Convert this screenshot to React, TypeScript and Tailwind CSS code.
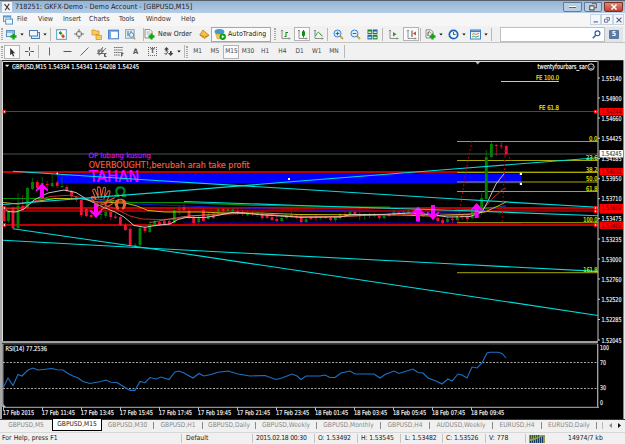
import type { ReactNode } from 'react'
import { clsx } from 'clsx'

const UI_FONT = "font-['DejaVu_Sans_Condensed','DejaVu_Sans',sans-serif]"

const MENUS = [
  { label: 'File', w: 'w-[21px]' },
  { label: 'View', w: 'w-[25px]' },
  { label: 'Insert', w: 'w-[26px]' },
  { label: 'Charts', w: 'w-[30px]' },
  { label: 'Tools', w: 'w-[27px]' },
  { label: 'Window', w: 'w-[35px]' },
  { label: 'Help', w: 'w-[20px]' },
]

const PERIODS = ['M1', 'M5', 'M15', 'M30', 'H1', 'H4', 'D1', 'W1', 'MN']

const TABS = [
  { label: 'GBPUSD,M5', w: 'w-[52px]' },
  { label: 'GBPUSD,M15', w: 'w-[50px]' },
  { label: 'GBPUSD,M30', w: 'w-[52px]' },
  { label: 'GBPUSD,H1', w: 'w-[49px]' },
  { label: 'GBPUSD,Daily', w: 'w-[53px]' },
  { label: 'GBPUSD,Weekly', w: 'w-[61px]' },
  { label: 'GBPUSD,Monthly', w: 'w-[64px]' },
  { label: 'GBPUSD,H4', w: 'w-[49px]' },
  { label: 'AUDUSD,Weekly', w: 'w-[63px]' },
  { label: 'EURUSD,H4', w: 'w-[49px]' },
  { label: 'EURUSD,Daily', w: 'w-[55px]' },
]

const STATUS = [
  { text: 'For Help, press F1', w: 'w-[182px] pl-[2px] tracking-[0.04px]' },
  { text: 'Default', w: 'w-[71px] pl-[4px]' },
  { text: '2015.02.18 00:30', w: 'w-[62px] pl-[3px] tracking-[-0.25px]' },
  { text: 'O: 1.53492', w: 'w-[43px] pl-[3px] tracking-[-0.12px]' },
  { text: 'H: 1.53545', w: 'w-[43px] pl-[3px] tracking-[-0.12px]' },
  { text: 'L: 1.53482', w: 'w-[42px] pl-[4px] tracking-[-0.12px]' },
  { text: 'C: 1.53526', w: 'w-[43px] pl-[3px] tracking-[-0.12px]' },
  { text: 'V: 778', w: 'w-[40px] pl-[3px]' },
]

/* Price scale: label + y of its centre */
const PRICES: [string, number][] = [
  ['1.55140', 78], ['1.54900', 98], ['1.54660', 118], ['1.54425', 138.3], ['1.54185', 158.7],
  ['1.53950', 178.7], ['1.53710', 198.7], ['1.53475', 218.6], ['1.53235', 239], ['1.53000', 259],
  ['1.52760', 279], ['1.52520', 299.3], ['1.52285', 319.5], ['1.52045', 340],
]

const TIMES = [
  '17 Feb 2015', '17 Feb 11:45', '17 Feb 13:45', '17 Feb 15:45', '17 Feb 17:45', '17 Feb 19:45', '17 Feb 21:45',
  '17 Feb 23:45', '18 Feb 01:45', '18 Feb 03:45', '18 Feb 05:45', '18 Feb 07:45', '18 Feb 09:45',
]

/* x, high, body top, body bottom, low, direction */
type Candle = [number, number, number, number, number, 'u' | 'd']
const CANDLES: Candle[] = [
  [4, 206, 210, 221, 222, 'd'], [8.5, 210, 212, 221, 223, 'u'], [13, 206, 208, 228, 229, 'd'],
  [18, 193, 206, 228, 229, 'u'], [22.7, 195, 206, 210, 211, 'd'], [27.5, 187, 188, 208, 209, 'u'],
  [32.5, 178, 182, 189, 190, 'u'], [37.3, 180, 182, 188, 189, 'd'], [42.3, 177, 183, 184, 195, 'u'],
  [47.2, 181, 184, 185, 190, 'd'], [52.2, 174, 183, 186, 187, 'u'], [57.2, 181, 182.5, 186, 188, 'd'],
  [62, 177, 186, 187, 188, 'u'], [66.8, 185, 187, 191, 192, 'd'], [71.6, 190, 191, 196, 199, 'd'],
  [76.4, 196, 197, 200, 202, 'd'], [81.3, 198, 200, 215, 217, 'd'], [86.4, 208, 209, 216, 217, 'd'],
  [91.2, 213, 215, 217, 218, 'd'], [96, 211, 213, 216, 218, 'd'], [100.8, 210, 214, 215, 219, 'u'],
  [105.8, 210, 212, 216, 218, 'u'], [110.7, 211, 212, 217, 220, 'd'], [115.4, 214, 216.5, 218, 219, 'd'],
  [120.4, 216, 217, 225, 226, 'd'], [125.4, 223, 225, 230, 231, 'd'], [130.2, 227, 229, 245, 246, 'd'],
  [135.2, 243, 245, 246, 247, 'u'], [140, 226, 228, 245, 247, 'u'], [145, 226, 228, 231, 233, 'd'],
  [149.8, 221, 224, 232, 233, 'u'], [154.7, 219, 222, 225, 227, 'u'], [159.5, 221, 222, 225, 226, 'd'],
  [164.4, 219, 221, 224, 225, 'd'], [169.3, 220, 221, 224, 225, 'd'], [174.3, 208, 210, 223, 224, 'u'],
  [179.3, 206, 209, 210, 215, 'u'], [184, 204, 207, 210, 211, 'd'], [189, 209, 211, 217, 219, 'd'],
  [193.7, 215, 218, 223, 226, 'd'], [198.7, 216, 218, 222, 224, 'u'], [203.4, 208, 210, 221, 222, 'd'],
  [208.3, 212, 215, 219, 220, 'u'], [213.4, 212, 215, 218, 219, 'd'], [218.3, 207, 209, 212, 214, 'u'],
  [223.2, 207, 209, 211, 213, 'd'], [228, 207, 209, 211, 212, 'u'], [232.8, 207, 209, 212, 213, 'u'],
  [237.7, 208, 211, 213, 215, 'd'], [242.6, 210, 212, 213, 216, 'd'], [247.5, 211, 213, 215, 216, 'u'],
  [252.4, 211, 213, 214, 216, 'd'], [257.3, 212, 214, 215, 217, 'u'], [262.2, 212, 214, 218, 220, 'd'],
  [267.1, 214, 215, 218, 219, 'd'], [272, 214, 217, 220, 221, 'd'], [276.8, 215, 219, 221, 222, 'd'],
  [281.7, 216, 218, 221, 222, 'u'], [286.5, 214, 216, 218, 219, 'u'], [291.4, 212, 215, 217, 218, 'u'],
  [296.3, 214, 216, 217, 219, 'd'], [301.2, 215, 217, 222, 223, 'd'], [306.1, 217, 219, 222, 223, 'u'],
  [311, 216, 218, 219, 220, 'd'], [315.9, 215, 217, 218, 221, 'd'], [320.7, 216, 217, 218, 220, 'u'],
  [325.6, 216, 217, 218, 219, 'd'], [330.5, 217, 218, 220, 221, 'd'], [335.4, 216, 217, 220, 222, 'u'],
  [340.2, 213, 214, 218, 220, 'u'], [345.1, 212, 214, 215, 218, 'd'], [350, 210, 212, 214, 216, 'u'],
  [354.9, 210, 212, 214, 215, 'd'], [359.7, 212, 214, 216, 220, 'd'], [364.6, 213, 215, 216, 219, 'u'],
  [369.5, 213, 215, 216, 218, 'd'], [374.4, 213, 215, 216, 217, 'u'], [379.3, 214, 216, 218, 220, 'd'],
  [384.1, 214, 216, 218, 219, 'u'], [389, 213, 215, 216, 217, 'd'], [393.9, 210, 211, 215, 216, 'u'],
  [398.8, 211, 212, 213, 215, 'd'], [403.6, 210, 212, 214, 216, 'u'], [408.5, 210, 211, 213, 214, 'u'],
  [413.4, 209, 211, 213, 214, 'd'], [423.2, 211, 212, 216, 217, 'd'], [428, 211, 213, 215, 216, 'u'],
  [437.8, 216, 218, 221, 222, 'd'], [442.6, 218, 220, 223, 224, 'd'], [447.5, 217, 219, 222, 223, 'u'],
  [452.4, 216, 219, 220, 223, 'd'], [457.3, 214, 216, 220, 221, 'u'], [462.2, 214, 216, 217, 220, 'd'],
  [467.3, 215, 217, 219, 224, 'd'], [472.3, 207, 210, 218, 219, 'u'], [481.6, 193, 198, 212, 215, 'u'],
  [486.3, 150, 157, 199, 202, 'u'], [491.4, 142, 144, 157, 158, 'u'], [496.3, 144, 145, 146, 156, 'd'],
  [501.3, 141, 145.5, 146.5, 149, 'd'], [506.3, 145, 146, 154, 155, 'd'],
]

const FIBS: [string, number][] = [
  ['0.0', 141.5], ['23.6', 160.5], ['38.2', 172.5], ['50.0', 182], ['61.8', 191.5], ['100.0', 222.7], ['161.8', 272.7],
]

const RED_TAGS: [string, number][] = [['1.54744', 111.7], ['1.54031', 171.8], ['1.53602', 207.6], ['1.53402', 225.2]]

const RSI =
  '3,388 8,378 13,385.5 18,374.5 22,376 28,370 33,368 38,370 43,369.5 52,368.5 57,369.7 63,370 68,373.5 73,376 78,378 83,381.5 90,383.5 101,381.5 106,380 111,382.3 117,382.5 121,385 126,388 130,390.4 135,390.4 140,381.5 145,382.7 150,377.5 156,379 161,377 169,379.5 175,372 179,371 184,373 193,378 199,373.5 204,376 211,374.5 218,372.2 228,371 238,374 250,376 265,375.5 276,379.5 282,378 292,374 297,376 301,379.5 306,376 320,376 325,375 330,377.5 335,377.5 341,373 350,371 355,374 374,374 380,378 385,374.5 394,371 399,373.5 413,369 418,372.5 423,373 428,378 436,381 442,384 448,379 452,381 458,374 462,375 467,378 472,367 477,368 482,363 487,353 490,352.3 498,352.3 502,353.5 506,358'

function Label({ x, y, w, size = 7, fill = '#f4f4f4', children }: {
  x: number
  y: number
  w: number
  size?: number
  fill?: string
  children: string
}) {
  return (
    <text
      x={x}
      y={y}
      fontSize={size}
      fill={fill}
      stroke={fill}
      strokeWidth=".15"
      textLength={w}
      lengthAdjust="spacingAndGlyphs"
    >
      {children}
    </text>
  )
}

function Arrow({ x, y, down }: { x: number; y: number; down?: boolean }) {
  return (
    <path
      transform={`translate(${x} ${y})${down ? ' rotate(180)' : ''}`}
      d="M0-7.5 6-1V1L2-1.5V7.5H-2V-1.5L-6 1V-1Z"
      fill="#f0f"
    />
  )
}

function Chart() {
  return (
    <svg
      width="625"
      height="359"
      viewBox="0 60 625 359"
      className={clsx('block shrink-0', UI_FONT)}
      fill="none"
    >
      <rect y="60" width="625" height="359" fill="#000" />
      <path d="M0 60H625" stroke="#333" strokeWidth="2" />
      <path d="M1 60V419" stroke="#a8a8a8" strokeWidth="2" />
      <path d="M624.2 60V419" stroke="#e8e8e8" strokeWidth="1.6" />
      <path d="M2.5 341V61.5H597.5" stroke="#ddd" />
      <path d="M475.5 62H480L477.7 64.5Z" fill="#b0b8c8" />

      {/* session band, price levels */}
      <path d="M3 154H598" stroke="#303a3e" strokeWidth="1.7" />
      <rect x="57" y="173.5" width="464" height="10" fill="#00f" />
      <path d="M184 223.2H521" stroke="#00d" strokeWidth="1.2" />
      <path d="M3 111.5H598" stroke="#f00000" />
      <g stroke="#c00000" strokeWidth="2">
        <path d="M3 172H598M3 208H598M3 225H598" />
        <path d="M3 211H598" strokeWidth="1.7" />
      </g>

      {/* fibonacci levels */}
      <g stroke="#a8a800">
        {FIBS.map(([l, y]) => (
          <path key={l} d={`M457 ${y}H598`} />
        ))}
        <path d="M501 81.5H559" stroke="#e0e000" />
      </g>

      {CANDLES.map(([x, hi, top, bottom, lo, dir]) => {
        const c = dir === 'u' ? '#008400' : '#ee1438'
        return (
          <g key={x}>
            <path d={`M${x} ${hi}V${lo}`} stroke={c} opacity=".65" />
            <rect x={x - 1.4} y={top} width="2.8" height={bottom - top} fill={c} />
          </g>
        )
      })}

      {/* moving averages */}
      <g strokeWidth=".9">
        <path d="M3 198.5 78 198.5 100 199.5 130 202.3 184 202.7 250 205.2 300 206 350 207 390 207.2M455 210 480 209 506 206" stroke="#009000" strokeWidth="1.2" />
        <path d="M35 201 60 198.5 95 199 110 203 130 203.7 160 205 200 206.5 270 209 330 210.5 400 212 455 212 480 211 506 206" stroke="#1414e8" />
        <path d="M3 202.5 18 204 32 202 55 198.5 80 198.5 98 202 125 203 137 206 148 210.5 165 212 200 212 230 213.2 260 213 300 214.5 400 215 430 216 470 214 485 212 498 206 506 202" stroke="#d8cc00" />
        <path d="M3 209 22 208 35 201 50 196.5 68 195.3 84 198 100 203 118 210 130 216 142 219 160 219.5 176 219 190 216 220 214.5 250 213 290 216 340 216.5 400 214 440 215.5 470 215 484 208 494 197 502 190 506 188" stroke="#e03020" />
        <path d="M3 207 8 211.5 16 212 24 209 34 200 48 193 64 190 76 192.5 88 200 103 207 115 212 124 217 134 225.5 145 227.3 155 225.5 170 224 178 219.5 186 217.5 205 217.5 220 215 232 212.5 245 213 260 214.7 300 217.3 340 217 350 214.8 385 214.3 410 213 430 214.5 448 217 470 216.5 482 212 488 201 496 184 505 172.5" stroke="#d8d8d8" />
        <path d="M150 222.5 184 216.5 232 212.7 300 216.8 345 216.5 380 214.5M440 214 470 214.5" stroke="#f8b0a0" opacity=".6" />
      </g>

      <Arrow x={42} y={190.5} />
      <Arrow x={96} y={210.5} down />
      <Arrow x={418} y={214} />
      <Arrow x={433} y={212.5} down />
      <Arrow x={476.7} y={210.5} />

      {/* hand and head symbols */}
      <g stroke="#e85a3a" strokeWidth="1.1" strokeLinejoin="round">
        <path d="M98 207 94.5 202 91.5 198.5C90.5 196.8 92 196 93.5 197L96 199.5 92.7 191C92.4 189 94.6 188.3 95.4 190.5L98.5 198 97.4 188.5C97.4 186.3 100 186.3 100.3 188.5L101.3 197.5 103.2 188.5C103.7 186.5 106 187 105.6 189.3L104 198.5 107.8 191.5C108.8 189.8 110.6 191 109.9 192.8L107 201.5 104.5 208" />
        <path d="M98 206 114 200.5M101 210 113 203.5M104 203 115 197.5" />
      </g>
      <path d="M114.6 197V194.5H116.5C114.5 192.5 114.3 186.5 120.4 186.3C126.6 186.5 126.4 192.5 124.4 194.5H126.3V197H121.6V194.5C124 193.5 124.4 188.8 120.4 188.6C116.5 188.8 116.9 193.5 119.3 194.5V197Z" fill="#008228" />
      <path d="M114.5 204C114.5 200 117.5 198.7 120.4 198.7S126.4 200 126.4 204L125 208C124 210 122.4 210 121.8 209L123 205 122 200.5H119L118 205 119.2 209C118.5 210 117 210 116 208Z" fill="#f0603c" />

      <Label x={88.5} y={157.8} w={62.5} size={7.2} fill="#d810f0">OP lubang kusung</Label>
      <Label x={88.7} y={168.3} w={161} size={8.8} fill="#f4623e">OVERBOUGHT!,berubah arah take profit</Label>
      <Label x={89} y={182} w={50.5} size={16.5} fill="#f0f">TAHAN</Label>

      {/* trend lines */}
      <g stroke="#00dede" strokeWidth="1.15">
        <path d="M13 171.2 160 180.7 300 189.3 460 199.3 598 207.3" />
        <path d="M3 204.5 160 192.4 300 181 460 168.5 598 157.8" />
        <path d="M3 240.3 160 248.8 440 263.3 598 271.4" />
        <path d="M13 228.7 160 250 440 291.7 598 315.5" />
        <path d="M184 201.5 300 205.5 460 210.5 598 215.8" />
      </g>
      <path d="M472 141 468 160 462 196 458 222M505 156V149L511 161" stroke="#c00000" strokeDasharray="2 2" />
      <path d="M505 156 502 224" stroke="#a00000" strokeDasharray="2 2" />

      <path d="M5 64.7H9.3L7.1 67Z" fill="#fff" />
      <Label x={12} y={68.6} w={127} size={6.7} fill="#fff">GBPUSD,M15  1.54334 1.54341 1.54208 1.54245</Label>
      <Label x={537.5} y={69.4} w={49.5} fill="#fff">twentyfourbars_sar</Label>
      <circle cx="591" cy="67" r="3.2" stroke="#ddd" />
      <path d="M589.7 66V66.6M592.3 66V66.6M589.3 68Q591 69.8 592.7 68" stroke="#eee" strokeWidth=".7" />

      <Label x={536} y={80.3} w={23} size={6.7} fill="#f0f000">FE 100.0</Label>
      <Label x={539} y={110.3} w={20} size={6.7} fill="#f0f000">FE 61.8</Label>
      {FIBS.map(([l, y]) => {
        const w = l.length * 2.85
        return <Label key={l} x={597.5 - w} y={y - 1} w={w} size={6.7} fill="#e8e800">{l}</Label>
      })}

      {/* selection handles */}
      <g fill="#fff">
        <rect x="519.8" y="172.8" width="2.2" height="2.2" />
        <rect x="519.8" y="182.8" width="2.2" height="2.2" />
        <rect x="288" y="178" width="2" height="2" />
        <rect x="56.5" y="172.7" width="1.5" height="1.5" />
      </g>
      {[111.7, 208, 211.3, 225].map((y) => (
        <g key={y} stroke="#f00" fill="#fff">
          {y !== 211.3 && <rect x="3.2" y={y - 1.3} width="2.4" height="2.6" />}
          <rect x="594.3" y={y - 1.3} width="2.4" height="2.6" />
        </g>
      ))}

      {/* price scale */}
      <path d="M598 61V341" stroke="#a8a8a8" strokeWidth="1.2" />
      {PRICES.map(([p, y]) => (
        <g key={p}>
          <path d={`M598 ${y}H600`} stroke="#ccc" />
          <Label x={601.5} y={y + 2.5} w={20} size={6.7}>{p}</Label>
        </g>
      ))}
      <rect x="599.5" y="207" width="23.5" height="6.6" fill="#f00" />
      {RED_TAGS.map(([p, y]) => (
        <g key={p}>
          <rect x="599.5" y={y - 3.7} width="23.5" height="7.4" fill="#f00" />
          <Label x={601.5} y={y + 2.5} w={20} size={6.7} fill="#780000">{p}</Label>
        </g>
      ))}
      <rect x="599.5" y="150" width="23.5" height="7.5" fill="#fff" />
      <Label x={601.5} y={156.2} w={20} size={6.7} fill="#444">1.54245</Label>

      {/* RSI pane */}
      <path d="M2 342.2H598" stroke="#a0a0a0" strokeWidth="2.2" />
      <path d="M2 344H598" stroke="#505050" />
      <path d="M2.8 344V407M597.7 344V407" stroke="#b8b8b8" strokeWidth="1.2" />
      <path d="M3 407.3H599" stroke="#909090" strokeWidth="1.3" />
      <path d="M3 362.5H598M3 388.5H598" stroke="#bbb" strokeDasharray="2 1.5" strokeWidth=".9" />
      <polyline points={RSI} stroke="#1c72c8" strokeWidth="1.1" />
      <path d="M3 404V407H6Z" fill="#b0b8c8" />
      <Label x={5.5} y={350.8} w={41.5} size={6.8}>RSI(14) 77.2536</Label>
      <Label x={600} y={350.3} w={9} size={6.7}>100</Label>
      <Label x={600} y={364.6} w={6} size={6.7}>70</Label>
      <Label x={600} y={390} w={6} size={6.7}>30</Label>
      <Label x={600} y={405} w={3} size={6.7}>0</Label>
      {TIMES.map((t, i) => (
        <g key={t}>
          <path d={`M${3.5 + i * 39} 407V410`} stroke="#bbb" />
          <Label x={2.7 + i * 39.03} y={415} w={i ? 33.3 : 31.5} size={6.7}>{t}</Label>
        </g>
      ))}
    </svg>
  )
}

function Tool({ w, on, children }: { w: string; on?: boolean; children?: ReactNode }) {
  return (
    <div
      className={clsx(
        'flex h-[14px] shrink-0 items-center justify-center gap-[3px]',
        w,
        on && 'border border-[#b4b4b4] bg-[#fafafa]',
      )}
    >
      {children}
    </div>
  )
}

function Icon({ children, size = 11 }: { children: ReactNode; size?: number }) {
  return (
    <svg width={size} height={size} viewBox="0 0 11 11" fill="none" className="shrink-0">
      {children}
    </svg>
  )
}

const Sep = () => <div className="h-[13px] w-px shrink-0 bg-[#b8b8b8]" />
const Grip = () => <div className="mx-px h-[12px] w-[2px] shrink-0 border-x border-dotted border-[#a8a8a8]" />
const Caret = () => (
  <svg width="4" height="3" viewBox="0 0 4 3" className="shrink-0"><path d="M.3.4H3.7L2 2.4Z" fill="#111" /></svg>
)
const Axes = () => <path d="M2 1V9.5H10M1 2.2 2 1 3 2.2M9 8.5 10 9.5 9 10.5" stroke="#777" strokeWidth=".8" />
const Plus = () => <path d="M7.5 4.5V10.5M4.5 7.5H10.5" stroke="#0ca80c" strokeWidth="2.3" />

function MainToolbar() {
  return (
    <div className="flex h-4 items-center bg-[#f1f1f1]">
      <Grip />
      <Tool w="w-[22px]">
        <Icon><rect x=".5" y="1.5" width="8" height="6" fill="#dcecf8" stroke="#5a90b8" /><path d="M1 3H8" stroke="#4a88c0" /><Plus /></Icon>
        <Caret />
      </Tool>
      <Tool w="w-[24px]">
        <Icon><rect x="2.5" y="3.5" width="8" height="6" fill="#dcecf8" stroke="#4a80b0" /><rect x=".5" y="1.5" width="8" height="5.5" fill="#f0f7fc" stroke="#4a80b0" /></Icon>
        <Caret />
      </Tool>
      <Sep />
      <Tool w="w-[20px]">
        <Icon><rect x=".7" y=".7" width="9.6" height="9.6" fill="#fff" stroke="#5098c8" /><path d="M2.5 4 4.5 2 6.5 4.5 4.5 6Z" fill="#109828" /><path d="M5 7 7 5 9 7.5 7 9.3Z" fill="#e84010" /></Icon>
      </Tool>
      <Tool w="w-[16px]">
        <Icon size={10}><circle cx="5.5" cy="5.5" r="3" stroke="#777" /><path d="M5.5 0V4M5.5 7V11M0 5.5H4M7 5.5H11" stroke="#666" /></Icon>
      </Tool>
      <Tool w="w-[18px]">
        <Icon><path d="M1 1H4L5 2H8V6H1ZM5 5.5H7L8 6.5H10.5V10.5H5Z" fill="#f8cc58" stroke="#c89020" strokeWidth=".7" /></Icon>
      </Tool>
      <Tool w="w-[16px]">
        <Icon><rect x=".6" y="1.2" width="9.8" height="8.6" fill="#fff" stroke="#3878c0" /><path d="M1 2H10" stroke="#3878c0" /><rect x="1" y="2.5" width="2" height="7" fill="#70a8e0" /></Icon>
      </Tool>
      <Tool w="w-[18px]">
        <Icon><rect x=".6" y=".7" width="8.5" height="8.5" fill="#e8f0f4" stroke="#80a0b8" /><path d="M3 2V7M6 2V5" stroke="#406080" /><circle cx="6.5" cy="6" r="2.3" fill="#d8eef8" stroke="#5890b8" /><path d="M8 8 10.3 10.3" stroke="#c8a040" strokeWidth="1.5" /></Icon>
      </Tool>
      <div className="w-[4px]" />
      <Sep />
      <div className="flex w-[53px] shrink-0 items-center gap-[3px] text-[7px]">
        <Icon><path d="M1 .5H6L8 2.5V9H1Z" fill="#f6f6f6" stroke="#777" strokeWidth=".8" /><path d="M2.5 3H6M2.5 5H6" stroke="#888" strokeWidth=".6" /><Plus /></Icon>
        <span>New Order</span>
      </div>
      <Tool w="w-[14px]">
        <Icon><path d="M.8 6 4 1 10 6.3 5.5 9.5Z" fill="#f4c040" stroke="#b07808" strokeWidth=".7" /><path d="M.8 6 5.5 8 10 6.3" stroke="#b07808" strokeWidth=".7" /></Icon>
      </Tool>
      <div className="flex h-[15px] w-[60px] shrink-0 items-center gap-[2px] border border-[#a8a8a8] bg-[#fafafa] pl-[2px] text-[7px]">
        <Icon size={12}><ellipse cx="5" cy="3.5" rx="4.5" ry="2.5" fill="#4898d0" /><path d="M1.5 5.5 3 10H6L8 5.5Z" fill="#f0c850" stroke="#b89030" strokeWidth=".4" /><circle cx="8" cy="8" r="2.9" fill="#10a018" /><path d="M7.2 6.5 9.6 8 7.2 9.5Z" fill="#fff" /></Icon>
        <span className="tracking-[0.06px]">AutoTrading</span>
      </div>
      <div className="w-[2px]" />
      <Grip />
      <Tool w="w-[17px]"><Icon><Axes /><path d="M6 3V8M6 3.5H8M4.5 7.5H6" stroke="#0a9010" /></Icon></Tool>
      <Tool w="w-[16px]" on><Icon><Axes /><path d="M6.5 1V8.5" stroke="#0a9010" /><rect x="5" y="2.3" width="3" height="4.5" fill="#0a9010" /></Icon></Tool>
      <Tool w="w-[17px]"><Icon><Axes /><path d="M2.5 7Q5 1.5 6.5 4T9.5 7" stroke="#309838" /></Icon></Tool>
      <Sep />
      <Tool w="w-[20px]"><Icon><path d="M6.5 6.5 10 10" stroke="#d0a830" strokeWidth="2" /><circle cx="4.5" cy="4.5" r="3.5" fill="#dcf0ff" stroke="#3c80c8" /><path d="M4.5 2.7V6.3M2.7 4.5H6.3" stroke="#2868b0" /></Icon></Tool>
      <Tool w="w-[15px]"><Icon><path d="M6.5 6.5 10 10" stroke="#d0a830" strokeWidth="2" /><circle cx="4.5" cy="4.5" r="3.5" fill="#dcf0ff" stroke="#3c80c8" /><path d="M2.7 4.5H6.3" stroke="#2868b0" /></Icon></Tool>
      <Tool w="w-[19px]"><Icon><rect x=".5" y=".5" width="4.7" height="4.6" fill="#188828" /><rect x="5.8" y=".5" width="4.7" height="4.6" fill="#2060b0" /><rect x=".5" y="5.8" width="4.7" height="4.6" fill="#2060b0" /><rect x="5.8" y="5.8" width="4.7" height="4.6" fill="#188828" /><path d="M1.3 3.2H4.4M6.6 3.2H9.7M1.3 8.5H4.4M6.6 8.5H9.7" stroke="#d8eec8" strokeWidth="1.6" /></Icon></Tool>
      <Sep />
      <Tool w="w-[20px]"><Icon><Axes /><path d="M5 3 8.5 5.3 5 7.6Z" fill="#20a030" /></Icon></Tool>
      <Tool w="w-[16px]" on><Icon><Axes /><path d="M6 1.5V8" stroke="#447" /><path d="M10 2.5 6.8 4.5 10 6.5Z" fill="#d84818" /></Icon></Tool>
      <div className="w-px" />
      <Sep />
      <Tool w="w-[25px]"><Icon><path d="M1 .8H6L8 2.8V9H1Z" fill="#eee" stroke="#777" strokeWidth=".8" /><path d="M3 7V3.5Q4.5 2 5.5 3.5" stroke="#555" /><Plus /></Icon><Caret /></Tool>
      <Tool w="w-[21px]"><Icon><circle cx="5.5" cy="5.5" r="4.2" fill="#f0f8ff" stroke="#1860b8" strokeWidth="1.7" /><path d="M5.5 3V5.5H7.5" stroke="#444" strokeWidth=".9" /></Icon><Caret /></Tool>
      <Tool w="w-[24px]"><Icon><rect x=".5" y="1" width="10" height="9" fill="#f4f8fc" stroke="#3c80c0" /><path d="M1 2.3H10" stroke="#3c80c0" strokeWidth="1.6" /><path d="M2 5.5 4 4.5 6 5.5 9 4.2" stroke="#c06030" strokeWidth=".8" /><path d="M2 8 4 7 6 8.2 9 6.8" stroke="#289040" strokeWidth=".8" /></Icon><Caret /></Tool>
      <Sep />
      <div className="ml-auto flex h-[15px] w-[105px] shrink-0 items-center justify-end border border-[#c0c0c0] bg-white pr-[3px]">
        <Icon size={9}><circle cx="6.7" cy="4" r="3" stroke="#2858b8" strokeWidth="1.4" /><path d="M4.5 6.3 1 10" stroke="#2858b8" strokeWidth="1.7" /></Icon>
      </div>
      <div className="mr-[2px] flex h-[15px] w-[18px] shrink-0 items-center justify-center bg-[#e2e4e8]">
        <div className="flex h-[9px] w-[10px] items-center justify-center rounded-[1px] bg-[#5c78a0] text-[7px] font-bold text-white">5</div>
      </div>
    </div>
  )
}

function DrawingToolbar() {
  return (
    <div className="flex h-[18px] items-center border-t border-[#c4c4c4] bg-[#f1f1f1] text-[6.5px] text-[#444]">
      <Grip />
      <Tool w="w-[16px]" on><Icon size={10}><path d="M3.5 1V9L5.3 7.3 6.7 10.5 8 9.8 6.5 7H9Z" fill="#333" /></Icon></Tool>
      <Tool w="w-[18px]"><Icon><path d="M5.5 1V4.5M5.5 6.5V10M1 5.5H4.5M6.5 5.5H10" stroke="#555" /></Icon></Tool>
      <Sep />
      <Tool w="w-[20px]"><Icon><path d="M5.5 1.5V9.5" stroke="#666" /></Icon></Tool>
      <Tool w="w-[16px]"><Icon><path d="M1.5 5.5H9.5" stroke="#555" /></Icon></Tool>
      <Tool w="w-[18px]"><Icon><path d="M1.5 9.5 9.5 1.5" stroke="#666" /></Icon></Tool>
      <Tool w="w-[16px]"><Icon><path d="M1 8 7 1M3 9.5 10 2M1 5H8M2 7.5H8M3 3V9M6 2V8" stroke="#555" strokeWidth=".8" /><path d="M10.5 7.5H8.5V10.5H10.5M8.5 9H10" stroke="#333" strokeWidth=".8" /></Icon></Tool>
      <Tool w="w-[18px]"><Icon><path d="M1 1.5H10M1 4H10M1 6.5H10M1 9H7" stroke="#666" strokeDasharray="1.5 .6" /><path d="M10.5 7.5H8.5V10.5M8.5 9H10" stroke="#333" strokeWidth=".8" /></Icon></Tool>
      <Tool w="w-[17px]"><span className="text-[7.5px] font-bold text-[#555]">A</span></Tool>
      <Tool w="w-[17px]"><div className="flex size-[9px] items-center justify-center border border-dotted border-[#666] text-[6.5px] font-bold text-[#555]">T</div></Tool>
      <Tool w="w-[22px]"><Icon><path d="M1 3.5 3.5 1 6 3.5H4.5V5.5H2.5V3.5ZM5 7H7V5H8.7V7H10.5L7.7 10Z" fill="#444" /><path d="M1.5 7 3 8.5 5 5.5" stroke="#444" /></Icon><Caret /></Tool>
      <div className="w-px" />
      <Sep />
      <Grip />
      {PERIODS.map((p) => (
        <Tool key={p} w={p === 'M15' ? 'w-[16px]' : 'w-[17.2px]'} on={p === 'M15'}>
          <span>{p}</span>
        </Tool>
      ))}
      <div className="ml-px"><Sep /></div>
    </div>
  )
}

export default function App() {
  return (
    <div className={clsx('flex h-[444px] w-[625px] flex-col overflow-hidden whitespace-nowrap bg-[#f0f0f0] leading-none text-[#222]', UI_FONT)}>
      <header className="flex h-[13px] items-center border-t border-[#56616e] bg-linear-to-b from-[#96b4d4] to-[#b5cce6] text-[7.2px]">
        <div className="ml-[2px] mr-[3px] flex size-[10px] items-center justify-center bg-[#f4f4f4]">
          <Icon size={8}><path d="M2 1.5 9 9.5M8.5 1 3 10" stroke="#333" strokeWidth="1.5" /></Icon>
        </div>
        <span className="tracking-[0.03px]">718251: GKFX-Demo - Demo Account - [GBPUSD,M15]</span>
        <div className="mr-[2px] ml-auto flex h-[10px] gap-[2px]">
          <div className="flex w-[19px] items-center justify-center rounded-b-[2px] border border-[#617a96] bg-[#b9cde2]">
            <div className="h-[2px] w-[7px] border-b border-[#666] bg-white" />
          </div>
          <div className="flex w-[18px] items-center justify-center rounded-b-[2px] border border-[#617a96] bg-[#b9cde2]">
            <Icon size={8}><path d="M4 1H10V6.5H8M1 4H7V9.5H1Z" stroke="#555" strokeWidth="1.5" fill="#eee" /></Icon>
          </div>
          <div className="flex w-[19px] items-center justify-center rounded-b-[2px] border border-[#7c3028] bg-linear-to-b from-[#d88878] to-[#c04028]">
            <Icon size={8}><path d="M2 2 9 9M9 2 2 9" stroke="#fff" strokeWidth="2.2" /></Icon>
          </div>
        </div>
      </header>

      <nav className="flex h-[13px] items-center bg-[#f6f6f6] text-[7px] text-[#333]">
        <div className="w-[17px] pl-[3px]">
          <Icon size={10}><rect x=".5" y="1" width="8" height="6" fill="#e4f2fc" stroke="#4a90c4" /><path d="M1 2H8" stroke="#4a90c4" strokeWidth="1.4" /><rect x="3" y="4.5" width="7.5" height="5.5" fill="#f4faff" stroke="#4a90c4" /></Icon>
        </div>
        {MENUS.map((m) => (
          <span key={m.label} className={clsx('shrink-0', m.w)}>{m.label}</span>
        ))}
        <div className="mr-px ml-auto flex h-[11px] text-[#557]">
          <div className="flex w-[11px] items-center justify-center border border-[#c8d4e0] bg-[#f3f7fb]"><Icon size={6}><path d="M1 9H9" stroke="#558" strokeWidth="2" /></Icon></div>
          <div className="flex w-[12px] items-center justify-center border border-[#c8d4e0] bg-[#f3f7fb]"><Icon size={6}><path d="M4 1H10V6H8M1 4H7V9.5H1Z" stroke="#558" strokeWidth="1.5" /></Icon></div>
          <div className="flex w-[11px] items-center justify-center border border-[#c8d4e0] bg-[#f3f7fb]"><Icon size={6}><path d="M1 1 10 10M10 1 1 10" stroke="#558" strokeWidth="2" /></Icon></div>
        </div>
      </nav>

      <MainToolbar />
      <DrawingToolbar />
      <Chart />

      <div className="flex h-[14px] shrink-0 items-start border-b border-[#d8d8d8] bg-[#f0f0f0] text-[6.6px] text-[#888]">
        {TABS.map((t) => {
          const active = t.label === 'GBPUSD,M15'
          return (
            <div
              key={t.label}
              className={clsx(
                'flex shrink-0 items-center justify-center',
                t.w,
                active ? 'h-[12px] border-x border-b border-black bg-white text-[#222]' : 'h-[12px] border-t border-[#333]',
              )}
            >
              <span className="flex-1 text-center">{t.label}</span>
              {!active && t.label !== 'GBPUSD,M5' && <span className="h-[7px] w-px bg-[#888]" />}
            </div>
          )
        })}
        <div className="flex h-[12px] flex-1 items-center gap-[6px] border-t border-[#333] pl-[5px]">
          <span className="h-[7px] w-px bg-[#bbb]" />
          <svg width="3" height="5" viewBox="0 0 3 5"><path d="M3 0V5L0 2.5Z" fill="#888" /></svg>
          <svg width="3" height="5" viewBox="0 0 3 5"><path d="M0 0V5L3 2.5Z" fill="#111" /></svg>
        </div>
      </div>

      <footer className="flex h-[11px] shrink-0 items-center bg-[#f0f0f0] text-[6.8px]">
        {STATUS.map((s) => (
          <div key={s.text} className={clsx('flex h-[9px] shrink-0 items-center border-r border-[#c4c4c4]', s.w)}>{s.text}</div>
        ))}
        <svg width="16" height="8" viewBox="0 0 16 8" className="ml-[3px]">
          <rect width="16" height="8" fill="#8f9a55" />
          <path d="M1.5 8V6M3.5 8V5.5M5.5 8V5M7.5 8V4M9.5 8V3M11.5 8V2.5M13.5 8V1.5" stroke="#173a60" />
          <path d="M1.5 0V4M3.5 0V3.5M5.5 0V3M7.5 0V2.5M9.5 0V2" stroke="#3a5a20" />
        </svg>
        <span className="ml-[23px]">14974/7 kb</span>
      </footer>
    </div>
  )
}
